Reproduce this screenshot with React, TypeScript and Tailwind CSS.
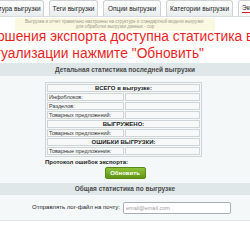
import React from 'react';

const tabs = [
  { label: 'Структура выгрузки', w: 'w-[66px]' },
  { label: 'Теги выгрузки', w: 'w-[49px]' },
  { label: 'Опции выгрузки', w: 'w-[58px]' },
  { label: 'Категории выгрузки', w: 'w-[67px]' },
];

function Row({ label }: { label: string }) {
  return (
    <tr>
      <td className="w-[77px] border border-[#cfd4d6] bg-[#f7f9f9] h-[7px] px-[1px] text-left leading-[6px]">{label}</td>
      <td className="border border-[#cfd4d6] bg-[#f7f9f9] h-[7px]"></td>
    </tr>
  );
}

function Head({ label }: { label: string }) {
  return (
    <tr>
      <td colSpan={2} className="border border-[#cfd4d6] bg-[#f7f9f9] h-[8px] text-center font-bold text-[6px] leading-[6px] text-[#222]">
        {label}
      </td>
    </tr>
  );
}

export default function App() {
  return (
    <div className="w-[250px] h-[250px] overflow-hidden bg-white font-['Liberation_Sans',Arial,sans-serif] text-[#333]">
      {/* tabs */}
      <div className="flex items-end gap-[5px] h-[17px] pt-[1px] -ml-[22px] border-b border-[#d7dcde] whitespace-nowrap">
        {tabs.map((t) => (
          <div
            key={t.label}
            className={`${t.w} shrink-0 h-[16px] flex items-center justify-center rounded-t-[3px] border border-b-0 border-[#cdd3d5] bg-gradient-to-b from-white to-[#e9edee] text-[6.5px] text-[#222]`}
          >
            {t.label}
          </div>
        ))}
        <div className="shrink-0 h-[16px] pl-[3px] pr-[10px] flex flex-col justify-center rounded-t-[3px] border border-b-0 border-[#cdd3d5] bg-white text-[6.5px] text-[#222]">
          <span className="border-b-[1.5px] border-[#e02020] leading-[8px]">Экспорт</span>
        </div>
      </div>

      {/* notice */}
      <div className="ml-[15px] w-[200px] mt-[1px] h-[13px] bg-[#fbf8e2] px-[10px] pt-[1px] text-[4.5px] leading-[5px] text-[#9a9a8a]">
        <div>Выгрузка и отчет правильно настроены на структуре и стандартной модели выгрузки</div>
        <div className="text-center">для обработки выгрузки данных - сор</div>
      </div>

      {/* red message */}
      <div className="-mt-[3px] text-[13.8px] leading-[17px] text-[#ea1f1f] whitespace-nowrap">
        <div className="-ml-[76px]">После завершения экспорта доступна статистика выгрузки.</div>
        <div className="-ml-[48px]">Для актуализации нажмите "Обновить"</div>
      </div>

      {/* section 1 */}
      <div className="mt-[1px] h-[13px] bg-[#e0e7e9] flex items-center justify-center text-[6.5px] font-bold text-[#4a4a4a]">
        Детальная статистика последней выгрузки
      </div>
      <div className="bg-[#f5f8f9] pt-[6px] pb-[4px]">
        <table className="ml-[45px] w-[157px] border-separate border-spacing-[1px] border border-[#cfd4d6] text-[5.5px] text-[#333]">
          <tbody>
            <Head label="ВСЕГО в выгрузке:" />
            <Row label="Инфоблоков:" />
            <Row label="Разделов:" />
            <Row label="Товарных предложений:" />
            <Head label="ВЫГРУЖЕНО:" />
            <Row label="Товарных предложений:" />
            <Head label="ОШИБКИ ВЫГРУЗКИ:" />
            <Row label="Товарные предложения:" />
          </tbody>
        </table>
        <div className="ml-[45px] mt-[2px] text-[6px] font-bold text-[#222] leading-[7px]">Протокол ошибок экспорта:</div>
        <div className="flex justify-center mt-[1px]">
          <button className="w-[41px] h-[12px] rounded-[2px] bg-gradient-to-b from-[#8fc23a] to-[#5f9413] border border-[#5a8a16] text-white text-[6px] font-bold">
            Обновить
          </button>
        </div>
      </div>

      {/* section 2 */}
      <div className="h-[12px] bg-[#e0e7e9] flex items-center justify-center text-[6.5px] font-bold text-[#4a4a4a]">
        Общая статистика по выгрузке
      </div>
      <div className="bg-[#f5f8f9] h-[26px] flex items-center border-b border-[#e2e7e8]">
        <div className="w-[122px] text-right pr-[2px] text-[6px] text-[#222]">Отправлять лог-файл на почту:</div>
        <input
          placeholder="email@email.com"
          className="ml-[1px] w-[108px] h-[12px] rounded-[2px] border border-[#a8aeb0] bg-white px-[2px] text-[5.5px] placeholder:text-[#a0a0a0] outline-none"
        />
      </div>
      <div className="h-[29px] bg-white"></div>
      <div className="h-[10px] bg-[#e6ebec]"></div>
    </div>
  );
}
